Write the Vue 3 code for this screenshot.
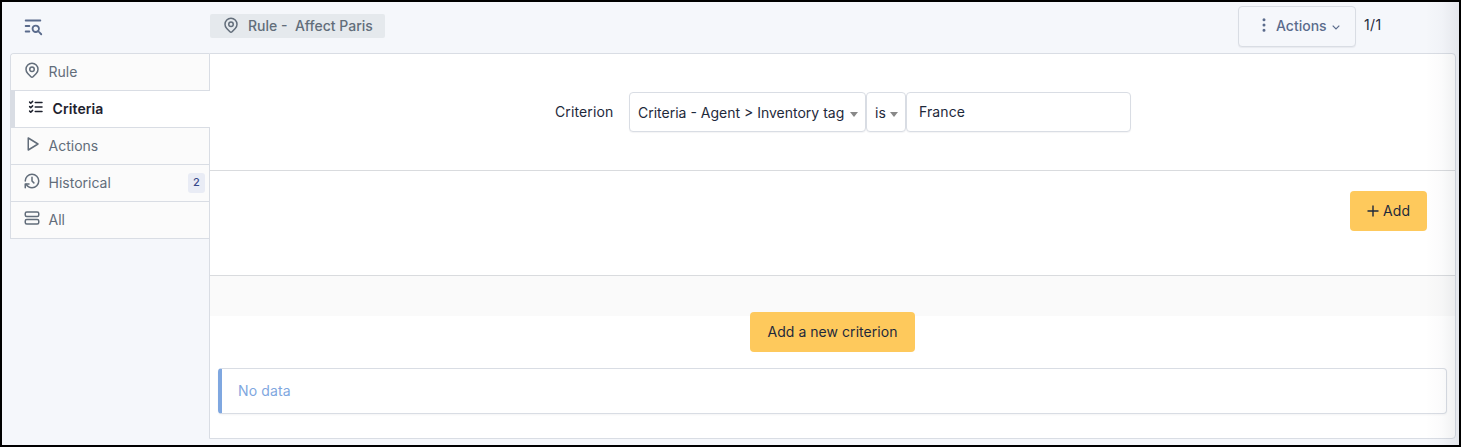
<script setup>
const icons = {
  pin: ['M9 11a3 3 0 1 0 6 0a3 3 0 0 0 -6 0', 'M17.657 16.657l-4.243 4.243a2 2 0 0 1 -2.827 0l-4.244 -4.243a8 8 0 1 1 11.314 0z'],
  checks: ['M3.5 5.5l1.5 1.5l2.5 -2.5', 'M3.5 11.5l1.5 1.5l2.5 -2.5', 'M3.5 17.5l1.5 1.5l2.5 -2.5', 'M11 6h9', 'M11 12h9', 'M11 18h9'],
  play: ['M7 4v16l13 -8z'],
  history: ['M12 7v5l2.5 2.5', 'M3 12a9 9 0 1 1 9 9c-3.2 0 -6 -1.7 -7.7 -4.5', 'M3 21v-5h5'],
  stack: [
    'M3 6a2 2 0 0 1 2 -2h14a2 2 0 0 1 2 2v2a2 2 0 0 1 -2 2h-14a2 2 0 0 1 -2 -2z',
    'M3 16a2 2 0 0 1 2 -2h14a2 2 0 0 1 2 2v2a2 2 0 0 1 -2 2h-14a2 2 0 0 1 -2 -2z',
  ],
}
const tabs = [
  { label: 'Rule', icon: 'pin' },
  { label: 'Criteria', icon: 'checks', active: true },
  { label: 'Actions', icon: 'play' },
  { label: 'Historical', icon: 'history', count: 2 },
  { label: 'All', icon: 'stack' },
]
</script>

<template>
  <div class="page">
    <aside class="side">
      <div class="side-top">
        <svg class="icon search" viewBox="0 0 24 24"><path d="M4 6h16M4 12h4M4 18h4M11.5 15a3.5 3.5 0 1 0 7 0a3.5 3.5 0 1 0 -7 0M18.5 18.5l2.5 2.5" /></svg>
      </div>
      <nav class="tabs">
        <a v-for="t in tabs" :key="t.label" class="tab" :class="{ active: t.active }">
          <svg class="icon" viewBox="0 0 24 24"><path v-for="d in icons[t.icon]" :key="d" :d="d" /></svg>
          <span class="label">{{ t.label }}</span>
          <span v-if="t.count" class="count">{{ t.count }}</span>
        </a>
      </nav>
    </aside>
    <main class="main">
      <header class="head">
        <h3 class="title">
          <svg class="icon" viewBox="0 0 24 24"><path v-for="d in icons.pin" :key="d" :d="d" /></svg>
          <span>Rule -&nbsp; Affect Paris</span>
        </h3>
        <div class="head-right">
          <button class="actions">
            <svg class="icon dots" viewBox="0 0 24 24"><path d="M11 5a1 1 0 1 0 2 0a1 1 0 1 0 -2 0M11 12a1 1 0 1 0 2 0a1 1 0 1 0 -2 0M11 19a1 1 0 1 0 2 0a1 1 0 1 0 -2 0" /></svg>
            <span>Actions</span>
            <svg class="chev" viewBox="0 0 8 5"><path d="M.7 .7L4 4L7.3 .7" /></svg>
          </button>
          <span class="pager">1/1</span>
        </div>
      </header>
      <section class="panel">
        <div class="criterion">
          <label>Criterion</label>
          <div class="select wide"><span>Criteria - Agent &gt; Inventory tag</span><i class="caret"></i></div>
          <div class="select narrow"><span>is</span><i class="caret"></i></div>
          <div class="input">France</div>
        </div>
        <div class="add-row">
          <button class="btn add">
            <svg class="plus" viewBox="0 0 12 12"><path d="M6 .5v11M.5 6h11" /></svg>
            <span>Add</span>
          </button>
        </div>
        <div class="strip"></div>
        <div class="new-row"><button class="btn new">Add a new criterion</button></div>
        <div class="alert">No data</div>
      </section>
    </main>
    <div class="shade"></div>
  </div>
</template>

<style>
body { background: #f5f7fb; }
</style>
<style scoped>
* { box-sizing: border-box; }
.page {
  position: relative; width: 1461px; height: 447px; display: flex; overflow: hidden;
  border: 2px solid #000; padding-left: 8px; background: #f5f7fb; color: #1e293b;
  font: 14px/20px Inter, sans-serif; letter-spacing: .12px;
}
button { font: inherit; letter-spacing: inherit; margin: 0; }
.icon { width: 18px; height: 18px; flex: none; fill: none; stroke: currentColor; stroke-width: 2; stroke-linecap: round; stroke-linejoin: round; }
.side { width: 199px; flex: none; }
.side-top { height: 51px; padding: 13px 0 0 12px; color: #5a6b8c; }
.search { width: 22px; height: 22px; display: block; }
.tabs { border: solid #d9dde4; border-width: 1px 0 0 1px; border-radius: 4px 0 0 0; }
.tab {
  height: 37px; display: flex; align-items: center; padding: 0 4px 0 12px;
  background: #fbfbfb; color: #626d7a; border-bottom: 1px solid #d9dde4; letter-spacing: 0;
}
.tab:first-child { border-top-left-radius: 3px; }
.tab .icon { margin: -4px 7.5px 0 0; }
.tab.active { position: relative; z-index: 1; margin: 0 -1px 0 -1px; background: #fff; color: #1e222e; font-weight: 600; border-left: 5px solid #d9dde4; letter-spacing: .1px; }
.count { margin-left: auto; width: 17px; height: 20px; border-radius: 3px; background: #e9ecf5; color: #36488a; font-size: 11px; line-height: 19px; font-weight: 500; text-align: center; }
.main { width: 1247px; flex: none; }
.head { height: 51px; display: flex; justify-content: space-between; }
.title { width: 175px; height: 24px; margin: 12px 0 0 1px; padding-left: 12px; display: flex; align-items: center; border-radius: 2px; background: #e5e9ed; color: #626d7a; font-size: 14px; font-weight: 500; letter-spacing: 0; }
.title .icon { margin: -2px 8px 0 0; }
.head-right { display: flex; width: 218px; padding-top: 4px; }
.actions { width: 118px; height: 41px; display: flex; align-items: center; padding: 0 0 2px 16px; border: 1px solid #d9dde4; border-radius: 4px; background: #f5f7fb; color: #5a6b8c; font-weight: 500; letter-spacing: 0; box-shadow: 0 1px 1px rgba(30, 41, 59, .06); }
.dots { margin: -1px 3px 0 0; }
.chev { width: 8px; height: 5px; margin: 3px 0 0 5px; fill: none; stroke: currentColor; stroke-width: 1.2; }
.pager { margin: 9px 0 0 8px; letter-spacing: .4px; }
.panel { height: 386px; border: 1px solid #d9dde4; border-radius: 0 4px 4px 0; background: #fff; }
.criterion { height: 117px; display: flex; align-items: flex-start; padding: 38px 0 0 345px; border-bottom: 1px solid #d9dbde; }
.criterion label { width: 74px; padding-top: 10px; }
.select, .input { height: 40px; border: 1px solid #d9dde4; border-radius: 4px; background: #fff; box-shadow: 0 1px 1px rgba(30, 41, 59, .05); }
.select { display: flex; align-items: center; justify-content: space-between; padding: 2px 7px 0 8px; letter-spacing: 0; }
.wide { width: 237px; }
.narrow { width: 40px; }
.input { width: 225px; padding: 9px 12px; }
.caret { border: solid transparent; border-width: 5px 4px 0; border-top-color: #888; margin-top: 2px; }
.add-row { height: 105px; display: flex; justify-content: flex-end; padding: 20px 28px 0 0; border-bottom: 1px solid #d9dbde; }
.btn { height: 40px; display: flex; align-items: center; justify-content: center; border: 0; border-radius: 4px; padding: 0; background: #fec95c; color: #1e293b; }
.add { width: 77px; gap: 4px; }
.plus { width: 12px; height: 12px; fill: none; stroke: currentColor; stroke-width: 1.4; }
.strip { height: 40px; background: #fafafa; }
.new-row { display: flex; justify-content: center; margin-top: -4px; }
.new { width: 165px; letter-spacing: .05px; }
.alert { height: 46px; margin: 16px 8px 0; padding: 12px 16px; border: 1px solid #d9dde4; border-left: 4px solid #7fa7e0; border-radius: 4px; color: #7fa7e0; background: #fff; box-shadow: 0 1px 2px rgba(30, 41, 59, .05); }
.shade { position: absolute; top: 0; right: 0; bottom: 0; width: 34px; background: linear-gradient(to right, rgba(30, 41, 59, 0), rgba(30, 41, 59, .02) 50%, rgba(30, 41, 59, .08)); pointer-events: none; }
</style>
